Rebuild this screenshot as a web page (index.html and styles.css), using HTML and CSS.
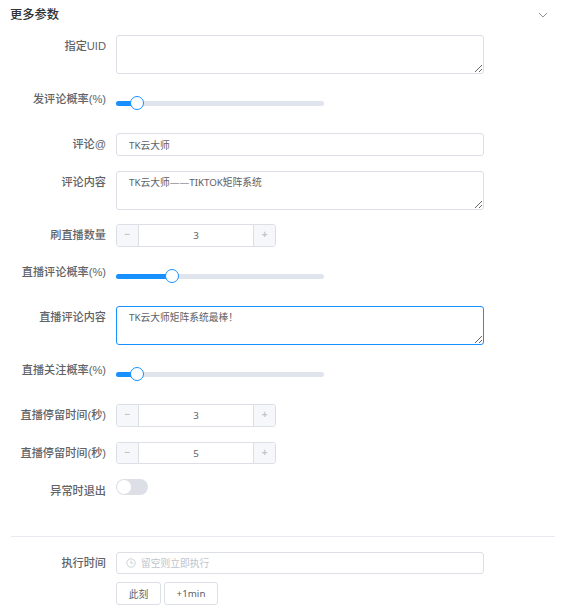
FILE: index.html
```html
<!DOCTYPE html>
<html lang="zh-CN">
<head>
    <meta charset="UTF-8">
    <meta name="viewport" content="width=device-width, initial-scale=1.0">
    <title>更多参数</title>
    <link rel="stylesheet" href="styles.css">
</head>
<body>
    <div class="panel">
        <div class="panel-header">
            <span class="panel-title">更多参数</span>
            <svg class="chevron" width="10" height="6" viewBox="0 0 10 6"><path d="M1 1l4 4 4-4" fill="none" stroke="#909399" stroke-width="1"/></svg>
        </div>

        <div class="form-item">
            <label class="form-label">指定UID</label>
            <textarea class="textarea"></textarea>
        </div>

        <div class="form-item slider-item">
            <label class="form-label">发评论概率(%)</label>
            <div class="slider">
                <div class="slider-track">
                    <div class="slider-bar" style="width: 10%"></div>
                    <div class="slider-thumb" style="left: 10%"></div>
                </div>
            </div>
        </div>

        <div class="form-item">
            <label class="form-label">评论@</label>
            <input class="input" type="text" value="TK云大师">
        </div>

        <div class="form-item before-number">
            <label class="form-label">评论内容</label>
            <textarea class="textarea">TK云大师——TIKTOK矩阵系统</textarea>
        </div>

        <div class="form-item">
            <label class="form-label">刷直播数量</label>
            <div class="number">
                <span class="number-btn">−</span>
                <input class="number-input" type="text" value="3">
                <span class="number-btn">+</span>
            </div>
        </div>

        <div class="form-item slider-item">
            <label class="form-label">直播评论概率(%)</label>
            <div class="slider">
                <div class="slider-track">
                    <div class="slider-bar" style="width: 27%"></div>
                    <div class="slider-thumb" style="left: 27%"></div>
                </div>
            </div>
        </div>

        <div class="form-item">
            <label class="form-label">直播评论内容</label>
            <textarea class="textarea is-focus">TK云大师矩阵系统最棒！</textarea>
        </div>

        <div class="form-item slider-item">
            <label class="form-label">直播关注概率(%)</label>
            <div class="slider">
                <div class="slider-track">
                    <div class="slider-bar" style="width: 10%"></div>
                    <div class="slider-thumb" style="left: 10%"></div>
                </div>
            </div>
        </div>

        <div class="form-item">
            <label class="form-label">直播停留时间(秒)</label>
            <div class="number">
                <span class="number-btn">−</span>
                <input class="number-input" type="text" value="3">
                <span class="number-btn">+</span>
            </div>
        </div>

        <div class="form-item">
            <label class="form-label">直播停留时间(秒)</label>
            <div class="number number-short">
                <span class="number-btn">−</span>
                <input class="number-input" type="text" value="5">
                <span class="number-btn">+</span>
            </div>
        </div>

        <div class="form-item switch-item">
            <label class="form-label">异常时退出</label>
            <div class="switch"></div>
        </div>

        <div class="divider"></div>

        <div class="form-item time-item">
            <label class="form-label">执行时间</label>
            <div class="time-control">
                <div class="input time-input">
                    <svg width="10" height="10" viewBox="0 0 10 10"><circle cx="5" cy="5" r="4.2" fill="none" stroke="#c0c4cc" stroke-width="0.8"/><path d="M5 2.6V5.2H7.2" fill="none" stroke="#c0c4cc" stroke-width="0.8"/></svg>
                    <span class="placeholder">留空则立即执行</span>
                </div>
                <div class="time-buttons">
                    <button class="btn btn-now">此刻</button>
                    <button class="btn btn-min">+1min</button>
                </div>
            </div>
        </div>
    </div>
</body>
</html>
```

FILE: styles.css
```css
* {
    margin: 0;
    padding: 0;
    box-sizing: border-box;
    font-family: 'Noto Sans', 'Noto Sans CJK SC', sans-serif;
}

body {
    background: white;
    overflow: hidden;
}

.panel {
    width: 545px;
    margin-left: 10px;
}

.panel-header {
    display: flex;
    align-items: center;
    justify-content: space-between;
    height: 27px;
    padding-right: 7px;
    margin-bottom: 8px;
}

.panel-title {
    font-size: 12.25px;
    font-weight: 500;
    color: #303133;
}

.chevron {
    margin-top: 3px;
}

.form-item {
    display: flex;
    margin-bottom: 15px;
}

.before-number {
    margin-bottom: 14px;
}

.form-label {
    width: 96px;
    margin-right: 10px;
    flex-shrink: 0;
    text-align: right;
    white-space: nowrap;
    font-family: 'Liberation Sans', 'Noto Sans CJK SC', sans-serif;
    font-size: 11.15px;
    font-weight: 500;
    line-height: 23px;
    color: #606266;
}

.textarea,
.input {
    display: block;
    width: 368px;
    border: 1px solid #dcdfe6;
    border-radius: 3px;
    padding: 0 12px;
    outline: none;
    font-size: 9.75px;
    color: #606266;
    background: white;
}

.textarea {
    height: 39px;
    line-height: 16px;
    padding-top: 3px;
    padding-bottom: 3px;
    resize: vertical;
}

.textarea.is-focus {
    border-color: #1890ff;
}

.input {
    height: 23px;
}

.slider-item {
    height: 38px;
    margin-top: -5px;
    margin-bottom: 11px;
}

.slider-item .form-label {
    line-height: 31px;
}

.slider {
    display: flex;
    align-items: center;
    width: 208px;
    height: 38px;
}

.slider-track {
    position: relative;
    width: 100%;
    height: 5px;
    border-radius: 3px;
    background: #dfe4ed;
}

.slider-bar {
    height: 100%;
    border-radius: 3px;
    background: #1890ff;
}

.slider-thumb {
    position: absolute;
    top: 50%;
    width: 14px;
    height: 14px;
    border: 1.5px solid #1890ff;
    border-radius: 50%;
    background: white;
    transform: translate(-50%, -50%);
}

.number {
    display: flex;
    width: 160px;
    height: 23px;
    border: 1px solid #dcdfe6;
    border-radius: 3px;
    overflow: hidden;
}

.number-short {
    height: 22px;
}

.number-btn {
    width: 22px;
    flex-shrink: 0;
    text-align: center;
    line-height: 18px;
    font-size: 10px;
    font-weight: 700;
    color: #c0c4cc;
    background: #f5f7fa;
}

.number-btn:first-child {
    border-right: 1px solid #dcdfe6;
}

.number-btn:last-child {
    border-left: 1px solid #dcdfe6;
}

.number-input {
    flex: 1;
    min-width: 0;
    border: none;
    outline: none;
    text-align: center;
    font-size: 9.75px;
    color: #606266;
}

.switch-item {
    margin-top: -1px;
    margin-bottom: 33px;
}

.switch-item .form-label {
    line-height: 24px;
}

.switch {
    position: relative;
    width: 32px;
    height: 16px;
    border-radius: 8px;
    background: #dcdfe6;
}

.switch::after {
    content: '';
    position: absolute;
    top: 1px;
    left: 1px;
    width: 14px;
    height: 14px;
    border-radius: 50%;
    background: white;
}

.divider {
    height: 1px;
    margin: 0 0 15px 1px;
    background: #e8eaf2;
}

.time-item {
    margin-bottom: 0;
}

.time-input {
    display: flex;
    align-items: center;
    gap: 5px;
    height: 22px;
    padding-left: 9px;
}

.placeholder {
    color: #c0c4cc;
}

.time-buttons {
    display: flex;
    gap: 3px;
    margin-top: 8px;
}

.btn {
    height: 23px;
    border: 1px solid #dcdfe6;
    border-radius: 3px;
    background: white;
    font-size: 9.75px;
    color: #606266;
}

.btn-now {
    width: 45px;
}

.btn-min {
    width: 54px;
}
```
